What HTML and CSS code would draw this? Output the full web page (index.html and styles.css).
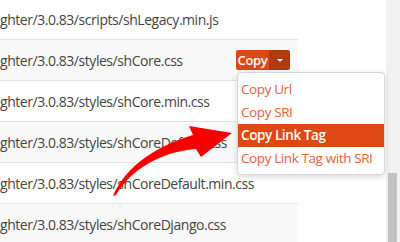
FILE: index.html
```html
<!DOCTYPE html>
<html lang="en">

<head>
    <meta charset="UTF-8">
    <title>cdnjs - SyntaxHighlighter</title>
    <link rel="stylesheet" href="styles.css">
</head>

<body>
    <div class="page">
        <div class="files">
            <div class="file-row">
                <div class="file-url">ghter/3.0.83/scripts/shLegacy.min.js</div>
            </div>
            <div class="file-row striped">
                <div class="file-url">ghter/3.0.83/styles/shCore.css</div>
                <div class="file-actions">
                    <div class="btn-group">
                        <button class="btn-copy">Copy</button>
                        <button class="btn-caret"><span class="caret"></span></button>
                        <ul class="copy-menu">
                            <li><a href="#">Copy Url</a></li>
                            <li><a href="#">Copy SRI</a></li>
                            <li class="active"><a href="#">Copy Link Tag</a></li>
                            <li><a href="#">Copy Link Tag with SRI</a></li>
                        </ul>
                    </div>
                </div>
            </div>
            <div class="file-row">
                <div class="file-url">ghter/3.0.83/styles/shCore.min.css</div>
            </div>
            <div class="file-row striped">
                <div class="file-url">ghter/3.0.83/styles/shCoreDefault.css</div>
            </div>
            <div class="file-row">
                <div class="file-url">ghter/3.0.83/styles/shCoreDefault.min.css</div>
            </div>
            <div class="file-row striped">
                <div class="file-url">ghter/3.0.83/styles/shCoreDjango.css</div>
            </div>
        </div>
        <div class="side"></div>
        <div class="scroll-track">
            <div class="scroll-thumb"></div>
        </div>
    </div>

    <!-- annotation arrow drawn over the screenshot -->
    <svg class="arrow" width="400" height="242" viewBox="0 0 400 242">
        <path d="M113,196 C122,174 146,149 193,135 L189,126 L232,133 L201,157 L196,149 C170,151 135,163 116,195 Z" fill="#f70000"/>
    </svg>
</body>

</html>
```

FILE: styles.css
```css
body {
    margin: 0;
    font-family: 'Open Sans', 'Noto Sans', sans-serif;
    font-size: 14px;
    color: #444;
    background-color: #fff;
    overflow: hidden;
}

.page {
    display: flex;
    height: 242px;
    overflow: hidden;
}

.files {
    width: 298px;
    margin-top: -2px;
}

.file-row {
    display: flex;
    align-items: center;
    height: 40px;
    border-top: 1px solid #e2e2e2;
}

.striped {
    background-color: #f9f9f9;
}

.file-url {
    flex: 1;
    white-space: nowrap;
    overflow: hidden;
    padding-top: 1px;
    letter-spacing: -0.45px;
}

.file-actions {
    padding-right: 8px;
}

.btn-group {
    position: relative;
    display: flex;
}

.btn-copy,
.btn-caret {
    border: none;
    height: 20px;
    margin: 0;
    color: #fff;
    font-family: inherit;
    font-size: 13px;
    font-weight: 600;
    letter-spacing: -0.3px;
    cursor: pointer;
}

.btn-copy {
    width: 33px;
    padding: 0;
    background-color: #dd4814;
    border-radius: 2px 0 0 2px;
}

.btn-caret {
    width: 21px;
    padding: 0;
    background-color: #b23a0f;
    border-radius: 0 2px 2px 0;
    display: flex;
    align-items: center;
    justify-content: center;
}

.caret {
    width: 0;
    height: 0;
    border-left: 3px solid transparent;
    border-right: 3px solid transparent;
    border-top: 3px solid #fff;
}

.copy-menu {
    position: absolute;
    top: 22px;
    left: 1px;
    width: 146px;
    margin: 0;
    padding: 5px 0 4px;
    list-style: none;
    background-color: #fff;
    border: 1px solid #d6d6d6;
    border-radius: 4px;
    box-shadow: 0 2px 6px rgba(0, 0, 0, 0.15);
    z-index: 5;
}

.copy-menu a {
    display: block;
    height: 23px;
    line-height: 23px;
    padding-left: 3px;
    color: #e4603a;
    font-size: 13.5px;
    letter-spacing: -0.4px;
    text-decoration: none;
    white-space: nowrap;
}

.copy-menu .active a {
    background-color: #dd4814;
    color: #fff;
    font-weight: 600;
}

.side {
    width: 88px;
}

.scroll-track {
    width: 14px;
    background-color: #f1f1f1;
    display: flex;
    flex-direction: column;
    justify-content: flex-end;
}

.scroll-thumb {
    height: 69px;
    margin: 0 3px 0 2px;
    background-color: #c1c1c1;
}

.arrow {
    position: absolute;
    top: 0;
    left: 0;
    pointer-events: none;
}
```
